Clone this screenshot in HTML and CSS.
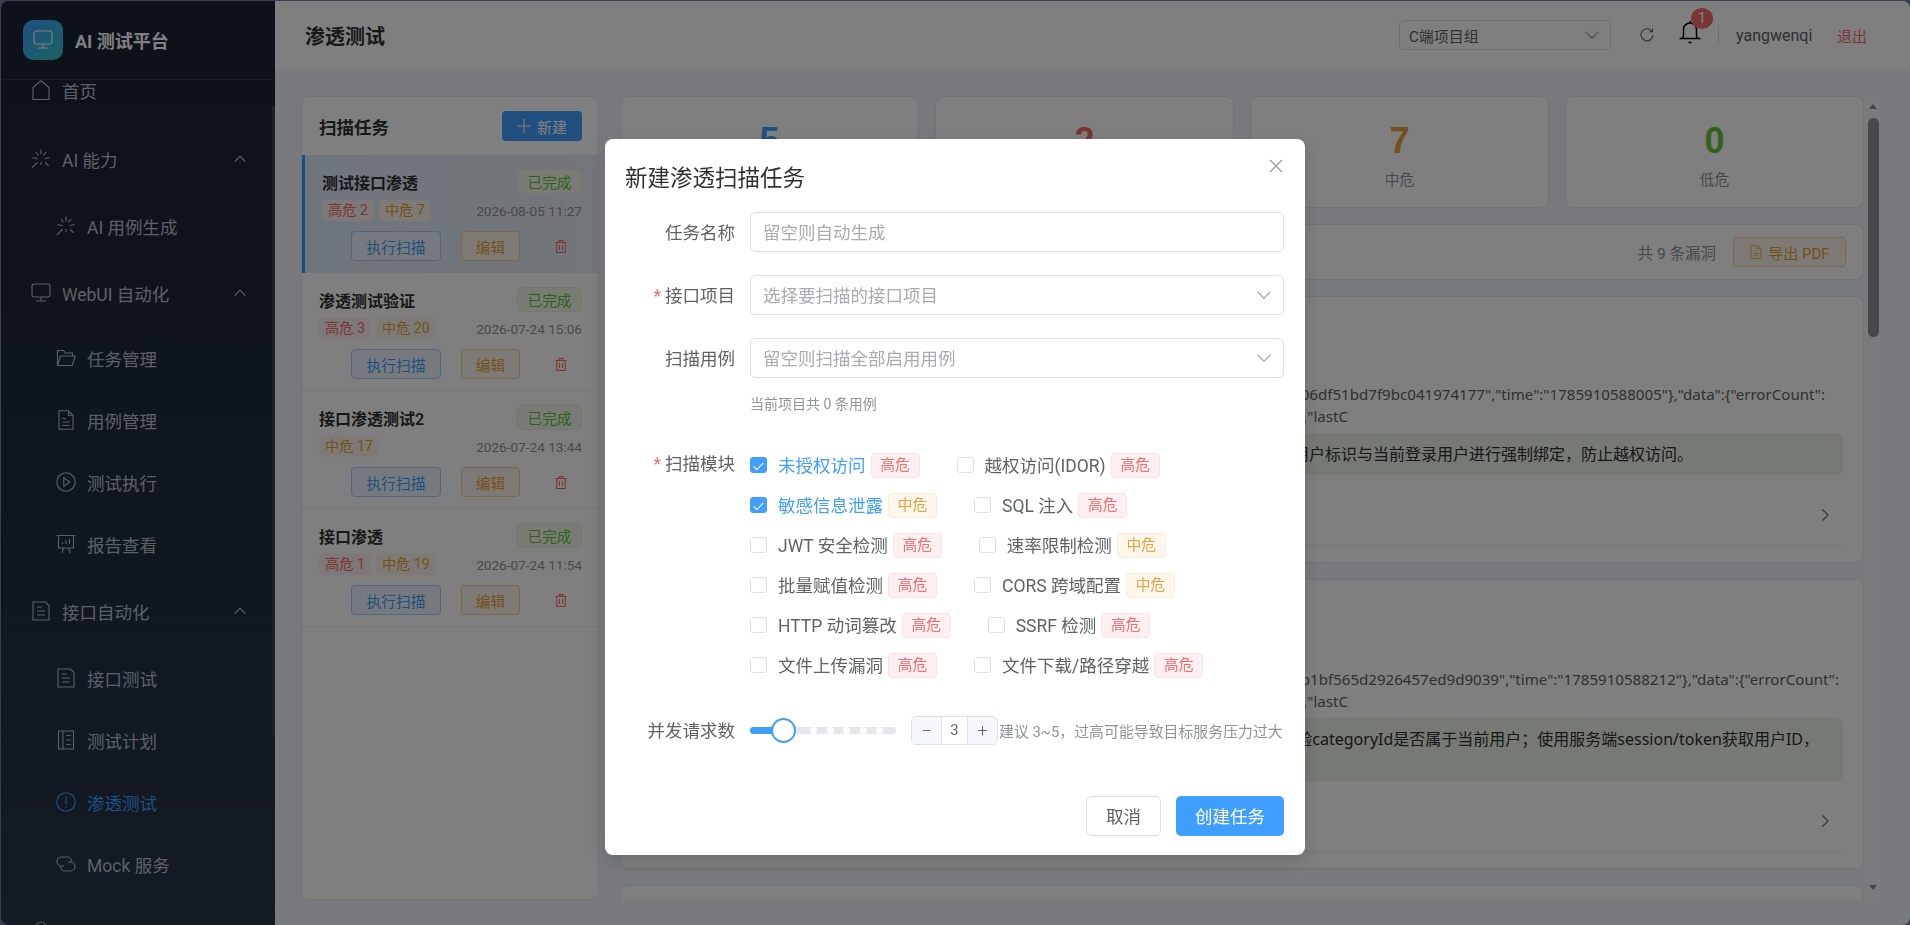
FILE: index.html
```html
<!DOCTYPE html>
<html lang="zh-CN">
<head>
    <meta charset="UTF-8">
    <meta name="viewport" content="width=device-width, initial-scale=1.0">
    <title>渗透测试</title>
    <link rel="stylesheet" href="styles.css">
</head>
<body>
    <svg class="icon-defs" aria-hidden="true">
        <symbol id="i-home" viewBox="0 0 20 20"><path d="M2 19.5V7.5L10 .8l8 6.7v12z"/></symbol>
        <symbol id="i-spark" viewBox="0 0 20 20"><path d="M10 .5v5M10 13v3M1.5 8.5l5 1.2M13.5 9.7l5-1.2M.8 18.8l5.7-5.3M14.2 13.5l3.5 3.3M5 3l2.5 3.5M15 3l-2.5 3.5"/></symbol>
        <symbol id="i-monitor" viewBox="0 0 20 20"><rect x="1" y="1" width="18" height="13" rx="2.5"/><path d="M10 14v4M5 18h10"/></symbol>
        <symbol id="i-folder" viewBox="0 0 20 20"><path d="M1.5 17.5V2.5h6l2 2.5h7v3M1.5 17.5h14.8l2.7-9.5H4.5z"/></symbol>
        <symbol id="i-doc" viewBox="0 0 20 20"><path d="M3 .8h9.5L17 5.3v14H3zM12.5.8v4.5H17M6.5 8.5H10M6.5 12h7M6.5 15.5h7"/></symbol>
        <symbol id="i-play" viewBox="0 0 20 20"><circle cx="10" cy="10" r="9.2"/><path d="M7.8 5.8l6 4.2-6 4.2z"/></symbol>
        <symbol id="i-board" viewBox="0 0 20 20"><path d="M.5 1.5h19M2.5 1.5V14h15V1.5M7.5 14L6 19M12.5 14l1.5 5M6.5 10V8M10 10V6M13.5 10V5"/></symbol>
        <symbol id="i-ticket" viewBox="0 0 20 20"><path d="M2 1h12.5L18 4.5V19H2zM6 6h5M6 10h8M6 14h8"/></symbol>
        <symbol id="i-plan" viewBox="0 0 20 20"><path d="M2.5 1h15v18h-15zM7 1v18M10.5 5.5h4M10.5 10h4M10.5 14.5h4"/></symbol>
        <symbol id="i-warn" viewBox="0 0 20 20"><circle cx="10" cy="10" r="9.2"/><path d="M10 4.5V12M10 14v1.5"/></symbol>
        <symbol id="i-link" viewBox="0 0 20 20"><path d="M8 12H5.5a4.500 4.500 0 0 1 0-9H11a4.500 4.500 0 0 1 4.500 4.500M12 8h2.500a4.500 4.500 0 0 1 0 9H9a4.500 4.500 0 0 1-4.500-4.500"/></symbol>
        <symbol id="i-user" viewBox="0 0 20 20"><circle cx="10" cy="6" r="5"/><path d="M2 19a8 8 0 0 1 16 0"/></symbol>
        <symbol id="i-trash" viewBox="0 0 12 13"><path d="M.5 2.5h11M4 2.5V.6h4v1.900M1.800 2.500v10h8.400v-10M4.500 5v5M7.500 5v5"/></symbol>
        <symbol id="i-up" viewBox="0 0 12 12"><path d="M.8 8.500L6 3.200l5.200 5.300"/></symbol>
        <symbol id="i-down" viewBox="0 0 12 12"><path d="M.5 3.200L6 8.800l5.500-5.600"/></symbol>
        <symbol id="i-right" viewBox="0 0 12 12"><path d="M3.500.5L9 6l-5.500 5.500"/></symbol>
        <symbol id="i-close" viewBox="0 0 14 14"><path d="M1 1l12 12M13 1L1 13"/></symbol>
        <symbol id="i-plus" viewBox="0 0 14 14"><path d="M7 0v14M0 7h14"/></symbol>
    </svg>

    <div class="app">
        <aside class="sidebar">
            <div class="logo">
                <span class="logo-mark"><svg class="icon-logo"><use href="#i-monitor"/></svg></span>
                <span class="logo-text">AI 测试平台</span>
            </div>
            <nav class="menu">
                <a class="menu-top menu-single"><svg class="icon"><use href="#i-home"/></svg>首页</a>
                <a class="menu-top"><svg class="icon"><use href="#i-spark"/></svg>AI 能力<svg class="icon-arrow"><use href="#i-up"/></svg></a>
                <div class="menu-subs">
                    <a class="menu-sub"><svg class="icon"><use href="#i-spark"/></svg>AI 用例生成</a>
                </div>
                <a class="menu-top menu-tight"><svg class="icon"><use href="#i-monitor"/></svg>WebUI 自动化<svg class="icon-arrow"><use href="#i-up"/></svg></a>
                <div class="menu-subs">
                    <a class="menu-sub"><svg class="icon"><use href="#i-folder"/></svg>任务管理</a>
                    <a class="menu-sub"><svg class="icon"><use href="#i-doc"/></svg>用例管理</a>
                    <a class="menu-sub"><svg class="icon"><use href="#i-play"/></svg>测试执行</a>
                    <a class="menu-sub"><svg class="icon"><use href="#i-board"/></svg>报告查看</a>
                </div>
                <a class="menu-top"><svg class="icon"><use href="#i-ticket"/></svg>接口自动化<svg class="icon-arrow"><use href="#i-up"/></svg></a>
                <div class="menu-subs">
                    <a class="menu-sub"><svg class="icon"><use href="#i-ticket"/></svg>接口测试</a>
                    <a class="menu-sub"><svg class="icon"><use href="#i-plan"/></svg>测试计划</a>
                    <a class="menu-sub active"><svg class="icon"><use href="#i-warn"/></svg>渗透测试</a>
                    <a class="menu-sub"><svg class="icon"><use href="#i-link"/></svg>Mock 服务</a>
                </div>
                <a class="menu-top"><svg class="icon"><use href="#i-user"/></svg></a>
            </nav>
            <div class="sidebar-scroll"></div>
        </aside>

        <div class="main">
            <header class="topbar">
                <h1 class="page-title">渗透测试</h1>
                <div class="topbar-right">
                    <div class="project-select">C端项目组<svg class="icon-select"><use href="#i-down"/></svg></div>
                    <svg class="icon-refresh" viewBox="0 0 16 16"><path d="M13 4.500A6 6 0 1 0 14 8M13.500 1.500v3.300h-3.300"/></svg>
                    <div class="bell">
                        <svg class="icon-bell" viewBox="0 0 22 24"><path d="M3.500 18.500q1-1.500 1-4V9.500a6.500 6.500 0 0 1 13 0v5q0 2.500 1 4M.5 18.500h21M11 1v2M9.500 22.500h3"/></svg>
                        <span class="bell-badge">1</span>
                    </div>
                    <span class="topbar-line"></span>
                    <span class="username">yangwenqi</span>
                    <span class="logout">退出</span>
                </div>
            </header>

            <div class="content">
                <section class="task-panel">
                    <div class="task-panel-head">
                        <h2>扫描任务</h2>
                        <button class="btn-new"><svg class="icon-plus"><use href="#i-plus"/></svg>新建</button>
                    </div>
                    <div class="task-item selected">
                        <div class="task-row">
                            <span class="task-name">测试接口渗透</span>
                            <span class="tag-done">已完成</span>
                        </div>
                        <div class="task-row task-meta">
                            <div class="task-counts"><span class="count high">高危 2</span><span class="count mid">中危 7</span></div>
                            <span class="task-time">2026-08-05 11:27</span>
                        </div>
                        <div class="task-actions">
                            <button class="btn-run">执行扫描</button>
                            <button class="btn-edit">编辑</button>
                            <svg class="icon-trash"><use href="#i-trash"/></svg>
                        </div>
                    </div>
                    <div class="task-item">
                        <div class="task-row">
                            <span class="task-name">渗透测试验证</span>
                            <span class="tag-done">已完成</span>
                        </div>
                        <div class="task-row task-meta">
                            <div class="task-counts"><span class="count high">高危 3</span><span class="count mid">中危 20</span></div>
                            <span class="task-time">2026-07-24 15:06</span>
                        </div>
                        <div class="task-actions">
                            <button class="btn-run">执行扫描</button>
                            <button class="btn-edit">编辑</button>
                            <svg class="icon-trash"><use href="#i-trash"/></svg>
                        </div>
                    </div>
                    <div class="task-item">
                        <div class="task-row">
                            <span class="task-name">接口渗透测试2</span>
                            <span class="tag-done">已完成</span>
                        </div>
                        <div class="task-row task-meta">
                            <div class="task-counts"><span class="count mid">中危 17</span></div>
                            <span class="task-time">2026-07-24 13:44</span>
                        </div>
                        <div class="task-actions">
                            <button class="btn-run">执行扫描</button>
                            <button class="btn-edit">编辑</button>
                            <svg class="icon-trash"><use href="#i-trash"/></svg>
                        </div>
                    </div>
                    <div class="task-item">
                        <div class="task-row">
                            <span class="task-name">接口渗透</span>
                            <span class="tag-done">已完成</span>
                        </div>
                        <div class="task-row task-meta">
                            <div class="task-counts"><span class="count high">高危 1</span><span class="count mid">中危 19</span></div>
                            <span class="task-time">2026-07-24 11:54</span>
                        </div>
                        <div class="task-actions">
                            <button class="btn-run">执行扫描</button>
                            <button class="btn-edit">编辑</button>
                            <svg class="icon-trash"><use href="#i-trash"/></svg>
                        </div>
                    </div>
                </section>

                <section class="result">
                    <div class="stats">
                        <div class="stat-card"><div class="stat-num num-blue">5</div></div>
                        <div class="stat-card"><div class="stat-num num-red">2</div><div class="stat-label">高危</div></div>
                        <div class="stat-card"><div class="stat-num num-orange">7</div><div class="stat-label">中危</div></div>
                        <div class="stat-card"><div class="stat-num num-green">0</div><div class="stat-label">低危</div></div>
                    </div>
                    <div class="result-bar">
                        <span class="result-total">共 9 条漏洞</span>
                        <button class="btn-export"><svg class="icon-export"><use href="#i-doc"/></svg>导出 PDF</button>
                    </div>
                    <div class="vuln-card">
                        <div class="raw raw-a">06df51bd7f9bc041974177","time":"1785910588005"},"data":{"errorCount":</div>
                        <div class="raw raw-end">,"lastC</div>
                        <div class="fix fix-a">用户标识与当前登录用户进行强制绑定，防止越权访问。</div>
                        <div class="vuln-foot"><svg class="icon-more"><use href="#i-right"/></svg></div>
                    </div>
                    <div class="vuln-card vuln-card-tall">
                        <div class="raw raw-b">b1bf565d2926457ed9d9039","time":"1785910588212"},"data":{"errorCount":</div>
                        <div class="raw raw-end">,"lastC</div>
                        <div class="fix fix-b">校验categoryId是否属于当前用户；使用服务端session/token获取用户ID，</div>
                        <div class="vuln-foot"><svg class="icon-more"><use href="#i-right"/></svg></div>
                    </div>
                    <div class="vuln-card"></div>
                </section>

                <div class="fake-scroll">
                    <span class="arrow-up"></span>
                    <span class="scroll-thumb"></span>
                    <span class="arrow-down"></span>
                </div>
            </div>
        </div>
    </div>

    <div class="dialog-wrap">
        <div class="dialog">
            <div class="dialog-head">
                <span class="dialog-title">新建渗透扫描任务</span>
                <svg class="icon-close"><use href="#i-close"/></svg>
            </div>
            <div class="form-row">
                <label class="form-label">任务名称</label>
                <div class="field">留空则自动生成</div>
            </div>
            <div class="form-row">
                <label class="form-label required">接口项目</label>
                <div class="field">选择要扫描的接口项目<svg class="icon-field"><use href="#i-down"/></svg></div>
            </div>
            <div class="form-row form-row-hint">
                <label class="form-label">扫描用例</label>
                <div class="field">留空则扫描全部启用用例<svg class="icon-field"><use href="#i-down"/></svg></div>
            </div>
            <div class="form-hint">当前项目共 0 条用例</div>

            <div class="form-modules">
                <label class="form-label form-label-check required">扫描模块</label>
                <div class="modules">
                    <div class="module-row">
                        <span class="check on"></span><span class="check-text on">未授权访问</span><span class="level high">高危</span>
                        <span class="check second"></span><span class="check-text">越权访问(IDOR)</span><span class="level high">高危</span>
                    </div>
                    <div class="module-row">
                        <span class="check on"></span><span class="check-text on">敏感信息泄露</span><span class="level mid">中危</span>
                        <span class="check second"></span><span class="check-text">SQL 注入</span><span class="level high">高危</span>
                    </div>
                    <div class="module-row">
                        <span class="check"></span><span class="check-text">JWT 安全检测</span><span class="level high">高危</span>
                        <span class="check second"></span><span class="check-text">速率限制检测</span><span class="level mid">中危</span>
                    </div>
                    <div class="module-row">
                        <span class="check"></span><span class="check-text">批量赋值检测</span><span class="level high">高危</span>
                        <span class="check second"></span><span class="check-text">CORS 跨域配置</span><span class="level mid">中危</span>
                    </div>
                    <div class="module-row">
                        <span class="check"></span><span class="check-text">HTTP 动词篡改</span><span class="level high">高危</span>
                        <span class="check second"></span><span class="check-text">SSRF 检测</span><span class="level high">高危</span>
                    </div>
                    <div class="module-row">
                        <span class="check"></span><span class="check-text">文件上传漏洞</span><span class="level high">高危</span>
                        <span class="check second"></span><span class="check-text">文件下载/路径穿越</span><span class="level high">高危</span>
                    </div>
                </div>
            </div>

            <div class="form-slider">
                <label class="form-label">并发请求数</label>
                <div class="slider">
                    <span class="slider-fill"></span>
                    <span class="slider-stop"></span><span class="slider-stop"></span><span class="slider-stop"></span><span class="slider-stop"></span><span class="slider-stop"></span>
                    <span class="slider-thumb"></span>
                </div>
                <div class="stepper">
                    <span class="stepper-btn">−</span>
                    <span class="stepper-val">3</span>
                    <span class="stepper-btn">+</span>
                </div>
                <span class="slider-hint">建议 3~5，过高可能导致目标服务压力过大</span>
            </div>

            <div class="dialog-foot">
                <button class="btn-cancel">取消</button>
                <button class="btn-create">创建任务</button>
            </div>
        </div>
    </div>
</body>
</html>
```

FILE: styles.css
```css
* {
    margin: 0;
    padding: 0;
    box-sizing: border-box;
}

html, body {
    height: 100%;
    overflow: hidden;
}

body {
    background: #747fa0;
    font-family: Roboto, 'Noto Sans CJK SC', sans-serif;
    color: #606266;
}

button {
    font-family: inherit;
    cursor: pointer;
}

.icon-defs {
    display: none;
}

svg {
    fill: none;
    stroke: currentColor;
    stroke-width: 1.1;
    flex: none;
}

.app {
    display: flex;
    height: 924px;
    margin: 1px 0 0 1px;
    border-radius: 8px;
    overflow: hidden;
}

/* sidebar */
.sidebar {
    position: relative;
    width: 274px;
    flex: none;
    overflow: hidden;
    background: linear-gradient(180deg, #1a2232, #263648);
    color: #b8c0cc;
    font-size: 17.5px;
}

.logo {
    position: relative;
    z-index: 1;
    display: flex;
    align-items: center;
    height: 79px;
    padding: 0 0 0 22px;
    background: #1a2232;
    border-bottom: 1px solid #2e3646;
}

.logo-mark {
    display: flex;
    align-items: center;
    justify-content: center;
    width: 40px;
    height: 40px;
    border-radius: 10px;
    background: linear-gradient(135deg, #409eff, #36c5c9);
    color: #fff;
}

.icon-logo {
    width: 20px;
    height: 20px;
}

.logo-text {
    margin-left: 12px;
    font-size: 18px;
    font-weight: 700;
    color: #fff;
}

.menu {
    margin-top: -21px;
}

.menu a {
    display: flex;
    align-items: center;
    height: 62px;
}

.menu-top {
    padding-left: 30px;
    margin-bottom: 5px;
}

.menu .menu-single {
    margin-bottom: 7px;
}

.menu .menu-tight {
    margin-bottom: 3px;
}

.menu-subs {
    margin-bottom: 5px;
}

.menu-sub {
    padding-left: 55px;
}

.menu-sub.active {
    color: #409eff;
}

.icon {
    width: 20px;
    height: 20px;
    margin-right: 11px;
}

.icon-arrow {
    width: 12px;
    height: 12px;
    margin-left: auto;
    margin-right: 29px;
}

.sidebar-scroll {
    position: absolute;
    top: 105px;
    right: 0;
    width: 3px;
    height: 631px;
    background: #343e50;
}

/* top bar */
.main {
    flex: 1;
    min-width: 0;
    display: flex;
    flex-direction: column;
    background: #f2f5fa;
}

.topbar {
    display: flex;
    align-items: center;
    justify-content: space-between;
    height: 68px;
    padding: 0 43px 0 30px;
    background: #fff;
    flex: none;
}

.page-title {
    font-size: 20px;
    font-weight: 700;
    color: #303133;
}

.topbar-right {
    display: flex;
    align-items: center;
}

.project-select {
    display: flex;
    align-items: center;
    justify-content: space-between;
    width: 212px;
    height: 30px;
    margin-right: 1px;
    padding: 0 11px 0 9px;
    border: 1px solid #dcdfe6;
    border-radius: 5px;
    font-size: 15px;
    color: #606266;
}

.icon-select {
    width: 14px;
    height: 14px;
    color: #a8abb2;
}

.icon-refresh {
    width: 16px;
    height: 16px;
    margin-left: 27px;
    color: #606266;
}

.bell {
    position: relative;
    width: 22px;
    height: 24px;
    margin-left: 24px;
    margin-top: -6px;
    color: #000;
}

.icon-bell {
    width: 22px;
    height: 24px;
    stroke-width: 1.5;
}

.bell-badge {
    position: absolute;
    top: -12px;
    left: 12px;
    width: 22px;
    height: 21px;
    border-radius: 50%;
    background: #f56c6c;
    color: #fff;
    font-size: 14px;
    line-height: 21px;
    text-align: center;
}

.topbar-line {
    width: 1px;
    height: 20px;
    margin: 0 17px;
    background: #dcdfe6;
}

.username {
    width: 78px;
    font-size: 16px;
    color: #606266;
}

.logout {
    margin-left: 23px;
    font-size: 15px;
    color: #f56c6c;
}

/* page body */
.content {
    flex: 1;
    display: flex;
    min-height: 0;
    padding: 27px 25px 25px 26px;
    overflow: hidden;
}

.task-panel {
    width: 298px;
    flex: none;
    background: #fff;
    border: 1px solid #e4e7ed;
    border-radius: 8px;
    overflow: hidden;
}

.task-panel-head {
    display: flex;
    align-items: center;
    justify-content: space-between;
    height: 58px;
    padding: 0 16px 0 17px;
}

.task-panel-head h2 {
    font-size: 17.5px;
    font-weight: 700;
    color: #303133;
}

.btn-new {
    display: flex;
    align-items: center;
    justify-content: center;
    width: 80px;
    height: 30px;
    border: none;
    border-radius: 4px;
    background: #409eff;
    color: #fff;
    font-size: 15px;
}

.icon-plus {
    width: 14px;
    height: 14px;
    margin-right: 6px;
}

.task-item {
    height: 118px;
    padding: 14px 16px 0 17px;
    border-bottom: 1px solid #ebeef5;
}

.task-item.selected {
    padding-left: 17px;
    border-left: 3px solid #409eff;
    border-bottom: none;
    background: linear-gradient(90deg, #dfebfa, #e6edf5);
}

.task-row {
    display: flex;
    align-items: center;
    justify-content: space-between;
}

.task-name {
    font-size: 16px;
    font-weight: 600;
    color: #303133;
}

.tag-done {
    display: inline-flex;
    align-items: center;
    justify-content: center;
    width: 65px;
    height: 25px;
    border: 1px solid #e1f3d8;
    border-radius: 5px;
    background: #f0f9eb;
    color: #67c23a;
    font-size: 14.7px;
}

.task-meta {
    margin-top: 6px;
    height: 21px;
}

.task-counts {
    display: flex;
    gap: 5px;
}

.count {
    height: 21px;
    padding: 0 6px;
    border-radius: 4px;
    font-size: 14.2px;
    line-height: 21px;
}

.count.high {
    background: #fef0f0;
    color: #f56c6c;
}

.count.mid {
    background: #fdf6ec;
    color: #e6a23c;
}

.task-time {
    font-size: 13.6px;
    color: #909399;
}

.task-actions {
    display: flex;
    align-items: center;
    margin-top: 10px;
    padding-left: 32px;
}

.selected .task-actions {
    padding-left: 29px;
}

.task-actions button {
    height: 30px;
    border-radius: 4px;
    font-size: 14.7px;
}

.btn-run {
    width: 90px;
    border: 1px solid #a0cfff;
    background: #ecf5ff;
    color: #409eff;
}

.btn-edit {
    width: 59px;
    margin-left: 20px;
    border: 1px solid #f3d19e;
    background: #fdf6ec;
    color: #e6a23c;
}

.icon-trash {
    width: 12px;
    height: 13px;
    margin-left: 35px;
    color: #f56c6c;
}

/* results */
.result {
    width: 1244px;
    flex: none;
    margin-left: 21px;
    display: flex;
    flex-direction: column;
    gap: 16px;
    overflow: hidden;
}

.stats {
    display: grid;
    grid-template-columns: repeat(4, 299px);
    gap: 16px;
    flex: none;
}

.stat-card {
    height: 112px;
    padding-top: 24px;
    background: #fff;
    border: 1px solid #e4e7ed;
    border-radius: 8px;
    text-align: center;
}

.stat-num {
    font-family: 'Liberation Sans', sans-serif;
    font-size: 36px;
    font-weight: 700;
    line-height: 40px;
}

.num-blue { color: #409eff; }
.num-red { color: #f56c6c; }
.num-orange { color: #e6a23c; }
.num-green { color: #67c23a; }

.stat-label {
    margin-top: 7px;
    font-size: 14.7px;
    color: #909399;
}

.result-bar {
    display: flex;
    align-items: center;
    justify-content: flex-end;
    flex: none;
    height: 56px;
    padding-right: 17px;
    background: #fff;
    border: 1px solid #e4e7ed;
    border-radius: 8px;
}

.result-total {
    font-size: 15.5px;
    color: #909399;
}

.btn-export {
    display: flex;
    align-items: center;
    justify-content: center;
    width: 113px;
    height: 30px;
    margin-left: 17px;
    border: 1px solid #f3d19e;
    border-radius: 4px;
    background: #fdf6ec;
    color: #e6a23c;
    font-size: 15px;
}

.icon-export {
    width: 14px;
    height: 14px;
    margin-right: 5px;
}

.vuln-card {
    flex: none;
    padding: 86px 20px 16px;
    background: #fff;
    border: 1px solid #e4e7ed;
    border-radius: 8px;
}

.vuln-card-tall {
    padding-top: 88px;
}

.raw {
    font-family: 'Noto Sans', 'Noto Sans CJK SC', sans-serif;
    font-size: 15.1px;
    line-height: 22px;
    text-align: right;
    white-space: nowrap;
    color: #606266;
}

.raw-a { margin-right: 18px; }
.raw-b { margin-right: 4px; }
.raw-end { margin-right: 495px; }

.fix {
    margin-top: 6px;
    padding: 11px 0;
    border-radius: 6px;
    background: #eaf4e4;
    font-family: 'Noto Sans', 'Noto Sans CJK SC', sans-serif;
    font-size: 16px;
    line-height: 20px;
    text-align: right;
    color: #303133;
}

.fix-a { padding-right: 150px; }

.fix-b {
    height: 63px;
    padding-right: 24px;
}

.vuln-foot {
    display: flex;
    align-items: center;
    justify-content: flex-end;
    height: 71px;
    padding: 10px 12px 0;
    border-bottom: 1px solid #ebeef5;
}

.icon-more {
    width: 12px;
    height: 14px;
    color: #606266;
}

.fake-scroll {
    position: relative;
    width: 19px;
    flex: none;
    background: #f5f6f9;
}

.arrow-up,
.arrow-down {
    position: absolute;
    left: 5px;
    width: 0;
    height: 0;
    border-left: 4.5px solid transparent;
    border-right: 4.5px solid transparent;
}

.arrow-up {
    top: 8px;
    border-bottom: 5px solid #8a8a8a;
}

.arrow-down {
    bottom: 10px;
    border-top: 5px solid #8a8a8a;
}

.scroll-thumb {
    position: absolute;
    top: 22px;
    left: 4px;
    width: 11px;
    height: 219px;
    border-radius: 6px;
    background: #909399;
}

/* dialog */
.dialog-wrap {
    position: fixed;
    inset: 0;
    z-index: 10;
    display: flex;
    justify-content: center;
    padding-top: 139px;
    background: rgba(0, 0, 0, 0.5);
}

.dialog {
    width: 700px;
    height: 716px;
    padding: 0 21px 0 20px;
    border-radius: 8px;
    background: #fff;
    box-shadow: 0 6px 20px rgba(0, 0, 0, 0.15);
    font-size: 17.5px;
    color: #606266;
}

.dialog-head {
    display: flex;
    align-items: flex-start;
    justify-content: space-between;
    height: 73px;
    padding-top: 23px;
}

.dialog-title {
    font-size: 22.5px;
    line-height: 32px;
    color: #303133;
}

.icon-close {
    width: 14px;
    height: 14px;
    margin: -3px 1px 0 0;
    color: #909399;
}

.form-row {
    display: flex;
    align-items: center;
    margin-bottom: 23px;
}

.form-row-hint {
    margin-bottom: 0;
}

.form-label {
    width: 125px;
    flex: none;
    padding: 0 15px 2px 0;
    text-align: right;
    color: #606266;
}

.required::before {
    content: '*';
    margin-right: 4px;
    color: #f56c6c;
}

.field {
    display: flex;
    align-items: center;
    justify-content: space-between;
    flex: 1;
    height: 40px;
    padding: 0 12px 2px;
    border: 1px solid #dcdfe6;
    border-radius: 5px;
    color: #a8abb2;
}

.icon-field {
    width: 14px;
    height: 14px;
    margin-top: 2px;
    color: #a8abb2;
}

.form-hint {
    height: 20px;
    margin: 16px 0 0 125px;
    font-size: 14px;
    line-height: 20px;
    color: #909399;
}

.form-modules {
    display: flex;
    margin-top: 31px;
}

.form-label-check {
    line-height: 38px;
}

.module-row {
    display: flex;
    align-items: center;
    height: 40px;
}

.check {
    position: relative;
    width: 17px;
    height: 16px;
    flex: none;
    border: 1px solid #dcdfe6;
    border-radius: 3px;
    margin-right: 11px;
}

.check.second {
    margin-left: 37px;
}

.check.on {
    border-color: #409eff;
    background: #409eff;
}

.check.on::after {
    content: '';
    position: absolute;
    left: 5px;
    top: 1.5px;
    width: 4px;
    height: 9px;
    border: solid #fff;
    border-width: 0 1px 1px 0;
    transform: rotate(45deg);
}

.check-text {
    margin-top: -2px;
    color: #606266;
    white-space: nowrap;
}

.check-text.on {
    color: #409eff;
}

.level {
    width: 49px;
    height: 25px;
    flex: none;
    margin-left: 5px;
    border: 1px solid;
    border-radius: 4px;
    font-size: 14.7px;
    line-height: 22px;
    text-align: center;
}

.level.high {
    border-color: #fde2e2;
    background: #fef0f0;
    color: #f56c6c;
}

.level.mid {
    border-color: #faecd8;
    background: #fdf6ec;
    color: #e6a23c;
}

.form-slider {
    display: flex;
    align-items: center;
    height: 40px;
    margin-top: 25px;
}

.slider {
    position: relative;
    display: flex;
    align-items: center;
    justify-content: flex-end;
    gap: 9.5px;
    width: 146px;
    height: 7px;
    padding-right: 13px;
    border-radius: 4px;
    background: #e4e7ed;
}

.slider-fill {
    position: absolute;
    left: 0;
    top: 0;
    width: 33px;
    height: 7px;
    border-radius: 4px;
    background: #409eff;
}

.slider-stop {
    width: 7px;
    height: 7px;
    border-radius: 50%;
    background: #fff;
}

.slider-thumb {
    position: absolute;
    left: 21px;
    top: -9px;
    width: 25px;
    height: 25px;
    border: 2px solid #409eff;
    border-radius: 50%;
    background: #fff;
}

.stepper {
    display: flex;
    width: 87px;
    height: 29px;
    margin-left: 15px;
    border: 1px solid #dcdfe6;
    border-radius: 5px;
    overflow: hidden;
    font-size: 14.7px;
    line-height: 27px;
    text-align: center;
}

.stepper-btn {
    width: 29px;
    background: #f5f7fa;
    font-size: 18px;
    font-weight: 300;
    color: #606266;
}

.stepper-val {
    flex: 1;
    border-left: 1px solid #dcdfe6;
    border-right: 1px solid #dcdfe6;
}

.slider-hint {
    margin-left: 1px;
    font-size: 14.9px;
    white-space: nowrap;
    color: #909399;
}

.dialog-foot {
    display: flex;
    justify-content: flex-end;
    gap: 15px;
    margin-top: 46px;
}

.dialog-foot button {
    height: 40px;
    padding-bottom: 2px;
    border-radius: 5px;
    font-size: 17.5px;
}

.btn-cancel {
    width: 75px;
    border: 1px solid #dcdfe6;
    background: #fff;
    color: #606266;
}

.btn-create {
    width: 108px;
    border: none;
    background: #409eff;
    color: #fff;
}
```
